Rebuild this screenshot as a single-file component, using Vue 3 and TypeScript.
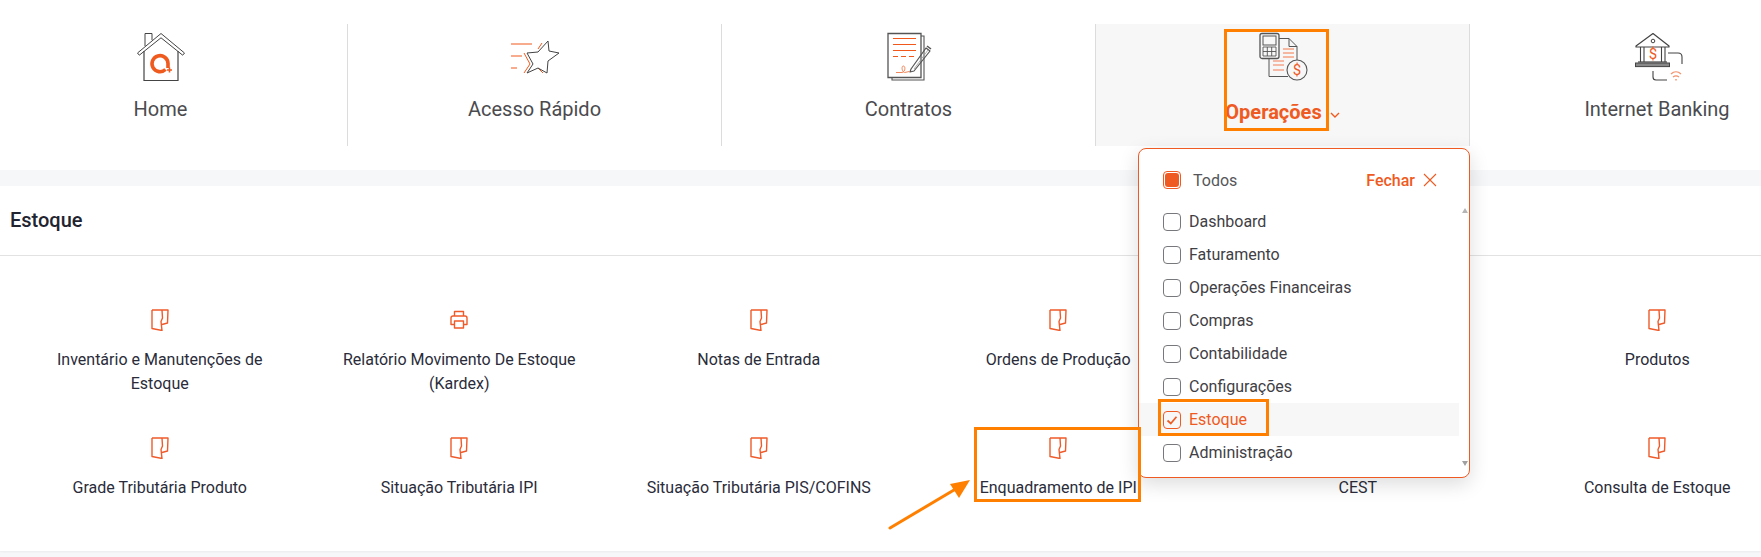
<script setup lang="ts">
interface GridItem { label: string; icon: 'door' | 'printer' }
const grid: GridItem[] = [
  { label: 'Inventário e Manutenções de Estoque', icon: 'door' },
  { label: 'Relatório Movimento De Estoque (Kardex)', icon: 'printer' },
  { label: 'Notas de Entrada', icon: 'door' },
  { label: 'Ordens de Produção', icon: 'door' },
  { label: 'Unidades', icon: 'door' },
  { label: 'Produtos', icon: 'door' },
  { label: 'Grade Tributária Produto', icon: 'door' },
  { label: 'Situação Tributária IPI', icon: 'door' },
  { label: 'Situação Tributária PIS/COFINS', icon: 'door' },
  { label: 'Enquadramento de IPI', icon: 'door' },
  { label: 'CEST', icon: 'door' },
  { label: 'Consulta de Estoque', icon: 'door' },
]
const options: string[] = ['Dashboard', 'Faturamento', 'Operações Financeiras', 'Compras', 'Contabilidade', 'Configurações', 'Estoque', 'Administração']
</script>

<template>
  <div class="page">
    <nav class="topnav">
      <div class="tab">
        <svg class="navicon" viewBox="0 0 48 48" fill="none" stroke="#444" stroke-width="1">
          <path d="M8 13V.5h7V7" />
          <path d="M24 .5 47.5 20l-1.8 2.2L24 4.8 2.3 22.2.5 20Z" stroke-linejoin="round" />
          <path d="M7 18v29.500h34V18" stroke-width="1.200" />
          <path d="M28.500 36.500A8 8 0 1 1 31 30.500V35" stroke="#ef5a1e" stroke-width="3.600" />
          <path d="M32.500 34.500v5M30 37h5" stroke="#ef5a1e" stroke-width="1.600" />
        </svg>
        <span class="tablabel">Home</span>
      </div>
      <div class="tab">
        <svg class="navicon" viewBox="0 0 48 48" fill="none" stroke="#f1581c" stroke-width="1">
          <path d="M0 11h21M0 23h11M0 35h6M31 10l-4 6M13 20l6 11-6 9M27 35l5 5" />
          <path d="M37 8 27 19l-11 1 6 11-6 9 11-5 9 5 1-12 11-8-10-2Z" stroke="#444" stroke-linejoin="round" />
        </svg>
        <span class="tablabel">Acesso Rápido</span>
      </div>
      <div class="tab">
        <svg class="navicon" viewBox="0 0 48 48" fill="none" stroke="#555">
          <path d="M3 .5h33v44H3Z" stroke-width="1.300" />
          <path d="M36 3h3v44H7v-2.500" stroke-width="1.100" />
          <path d="M8 5.500h23M8 11.500h23M8 17.500h23" stroke="#f1581c" stroke-width="1.100" />
          <path d="M8 23.500h23" stroke="#f1581c" stroke-width="1.100" stroke-dasharray="5 3" />
          <path d="M26 36 41 15l4 3-16 20-4 1Z" stroke-width="1.200" stroke-linejoin="round" />
          <path d="M42 13l4 3" stroke-width="1.500" />
          <path d="M29 36 43 17" stroke="#999" stroke-width=".8" />
          <path d="M11 39.500h6c3 0 4-6 1.500-6.500-2.500 0-1.500 6 1 6.500l5-1" stroke="#f1865a" stroke-width="1" />
        </svg>
        <span class="tablabel">Contratos</span>
      </div>
      <div class="tab active">
        <svg class="navicon" viewBox="0 0 48 48" fill="none" stroke="#555">
          <rect x="1" y=".5" width="19" height="25" rx="2" stroke-width="1.300" fill="#f7f7f7" />
          <rect x="4" y="3" width="13" height="9" stroke-width="1" />
          <path d="M4 14h13v9H4ZM8.300 14v9M12.700 14v9M4 18.500h13" stroke-width=".9" />
          <path d="M20 5.500h10l8 8V27M30 5.500v8h8M10 25.500V43.500h19" stroke-width="1" />
          <path d="M24 16h11M24 20h11M24 24h11" stroke="#f4794a" stroke-width="1" />
          <path d="M14 28h11M14 32h11M14 37h11" stroke="#f5a58a" stroke-width="1.600" />
          <circle cx="38" cy="37" r="10" stroke-width="1.100" fill="#f7f7f7" />
          <text class="dollar" x="38" y="42" text-anchor="middle">$</text>
        </svg>
        <span class="tablabel strong">Operações
          <svg class="chev" viewBox="0 0 10 6" fill="none" stroke="#ef5a1e" stroke-width="1.400"><path d="M1 1l4 4 4-4" /></svg>
        </span>
      </div>
      <div class="tab">
        <svg class="navicon wide" viewBox="0 0 50 48" fill="none" stroke="#444">
          <path d="M3 13 20 .5 36 13v1H3Z" stroke-width="1.200" stroke-linejoin="round" />
          <circle cx="20" cy="8" r="1.800" stroke-width="1" />
          <path d="M7.500 14v15M11 14v15M28.500 14v15M32 14v15" stroke-width="1.100" />
          <path d="M5 29h29" stroke-width="1.200" />
          <rect x="2.500" y="30" width="34" height="3.600" fill="#888" stroke-width="1" />
          <text class="dollar" x="20" y="26" text-anchor="middle">$</text>
          <path d="M35 20h10q4 0 4 4v7M20 38v6q0 3 3 3h11" stroke-width="1.100" />
          <path d="M38 41c3-3 7-3 10 0M40 44c2-1.500 4-1.500 6 0" stroke="#f5916a" stroke-width="1.200" />
          <path d="M43 46v1.500" stroke="#f5916a" stroke-width="1.500" />
        </svg>
        <span class="tablabel">Internet Banking</span>
      </div>
    </nav>

    <section class="stock">
      <h2 class="stock-title">Estoque</h2>
      <div class="stock-grid">
        <div v-for="item in grid" :key="item.label" class="cell">
          <svg v-if="item.icon === 'door'" class="cellicon" viewBox="0 0 18 22" fill="none" stroke="#ef5a2a" stroke-width="1.400" stroke-linejoin="round">
            <path d="M1 1H17L16.500 14 11 15.500" />
            <path d="M1 1V19.500L11 21.500 10 12.500 11.500 9 11 1" />
          </svg>
          <svg v-else class="cellicon" viewBox="0 0 18 22" fill="none" stroke="#ef5a2a" stroke-width="1.400" stroke-linejoin="round">
            <path d="M4.500 7V2.500h9V7" />
            <path d="M4 15.500H1V9q0-2 2-2h12q2 0 2 2v6.500h-3" />
            <path d="M4.500 12h9v7h-9Z" />
          </svg>
          <span class="celltext">{{ item.label }}</span>
        </div>
      </div>
    </section>

    <div class="menu">
      <div class="menu-head">
        <span class="box all"><i></i></span>
        <span class="todos">Todos</span>
        <span class="fechar">Fechar
          <svg class="close" viewBox="0 0 14 14" fill="none" stroke="#ef5a22" stroke-width="1.100"><path d="M1 1l12 12M13 1 1 13" /></svg>
        </span>
      </div>
      <ul class="menu-list">
        <li v-for="opt in options" :key="opt" class="menu-row" :class="{ picked: opt === 'Estoque' }">
          <span class="box">
            <svg v-if="opt === 'Estoque'" viewBox="0 0 16 16" fill="none" stroke="#ef5a22" stroke-width="1.700"><path d="M3.500 8.500 6.800 11.500 12.500 4.800" /></svg>
          </span>
          <span>{{ opt }}</span>
        </li>
      </ul>
      <i class="arrow up"></i>
      <i class="arrow down"></i>
    </div>

    <div class="mark mark-nav"></div>
    <div class="mark mark-opt"></div>
    <div class="mark mark-cell"></div>
    <svg class="pointer" viewBox="0 0 90 60" fill="none">
      <path d="M3 56 72 15" stroke="#ff8000" stroke-width="3" stroke-linecap="round" />
      <path d="M83 8 63 12 72 26Z" fill="#ff8000" />
    </svg>
  </div>
</template>

<style scoped>
.page {
  position: relative;
  width: 1761px;
  height: 557px;
  overflow: hidden;
  background: #f6f7f9;
  font-family: Roboto, "Liberation Sans", sans-serif;
}
.topnav {
  display: flex;
  height: 170px;
  padding: 24px 0 0 0;
  box-sizing: border-box;
  margin-left: -26px;
  width: 1900px;
  background: #fff;
}
.tab {
  flex: 0 0 374px;
  height: 122px;
  box-sizing: border-box;
  border-right: 1px solid #dcdcdc;
  display: flex;
  flex-direction: column;
  align-items: center;
  padding-top: 9px;
}
.tab:last-child { border-right: 0; }
.tab.active { background: #f7f7f7; }
.navicon {
  width: 48px;
  height: 48px;
  flex: none;
  overflow: visible;
}
.navicon.wide { width: 50px; margin-left: 2px; }
.dollar {
  font-family: Roboto, sans-serif;
  font-size: 15px;
  fill: #ef5a22;
  stroke: none;
}
.tablabel {
  margin-top: 16px;
  font-size: 20px;
  line-height: 24px;
  color: #4b4b4f;
  white-space: nowrap;
}
.tablabel.strong {
  display: flex;
  align-items: center;
  gap: 8px;
  margin-top: 19px;
  font-weight: 700;
  color: #ef5a22;
}
.chev { width: 10px; height: 6px; margin-top: 5px; }
.stock {
  margin-top: 16px;
  height: 365px;
  background: #fff;
  box-shadow: 0 1px 2px rgba(0, 0, 0, .05);
}
.stock-title {
  margin: 0;
  height: 70px;
  box-sizing: border-box;
  padding: 22px 0 0 10px;
  border-bottom: 1px solid #e2e2e2;
  font-size: 20px;
  line-height: 24px;
  font-weight: 500;
  color: #1f2430;
}
.stock-grid {
  display: grid;
  grid-template-columns: repeat(6, 299.5px);
  grid-auto-rows: 128px;
  padding: 53px 0 0 10px;
}
.cell {
  display: flex;
  flex-direction: column;
  align-items: center;
}
.cellicon { width: 18px; height: 22px; flex: none; }
.celltext {
  margin-top: 17px;
  width: 245px;
  text-align: center;
  font-size: 16px;
  line-height: 24px;
  color: #2a2c3a;
}
.menu {
  position: absolute;
  left: 1138px;
  top: 148px;
  width: 332px;
  height: 330px;
  box-sizing: border-box;
  padding: 22px 10px 0 0;
  background: #fff;
  border: 1px solid #ef5a22;
  border-radius: 8px;
  box-shadow: 0 6px 20px rgba(0, 0, 0, .14);
  font-size: 16px;
}
.menu-head {
  display: flex;
  align-items: center;
  height: 18px;
  padding-left: 24px;
  color: #55565a;
}
.todos { margin-left: 12px; }
.fechar {
  display: flex;
  align-items: center;
  gap: 8px;
  margin-left: auto;
  margin-right: 22px;
  font-weight: 500;
  color: #ef5a22;
}
.close { width: 14px; height: 14px; }
.box {
  width: 18px;
  height: 18px;
  flex: none;
  box-sizing: border-box;
  border: 1px solid #77787c;
  border-radius: 4px;
  display: flex;
  align-items: center;
  justify-content: center;
}
.box svg { width: 16px; height: 16px; }
.box.all { border-color: #ef5a22; }
.box.all i {
  width: 14px;
  height: 14px;
  border-radius: 3px;
  background: #ef5a22;
}
.menu-list {
  list-style: none;
  margin: 16px 0 0;
  padding: 0;
}
.menu-row {
  display: flex;
  align-items: center;
  gap: 8px;
  height: 33px;
  padding-left: 24px;
  color: #3f4045;
}
.menu-row.picked {
  background: #f7f7f7;
  color: #ef5a22;
}
.menu-row.picked .box { border-color: #ef5a22; }
.arrow {
  position: absolute;
  right: 1px;
  width: 0;
  height: 0;
  border-left: 3.500px solid transparent;
  border-right: 3.500px solid transparent;
}
.arrow.up { top: 59px; border-bottom: 5px solid #b5b5b5; }
.arrow.down { top: 312px; border-top: 5px solid #a0a0a0; }
.mark {
  position: absolute;
  box-sizing: border-box;
  border: 3px solid #ff8000;
}
.mark-nav { left: 1224px; top: 29px; width: 105px; height: 102px; }
.mark-opt { left: 1158px; top: 399px; width: 111px; height: 37px; }
.mark-cell { left: 974px; top: 427px; width: 167px; height: 75px; }
.pointer {
  position: absolute;
  left: 887px;
  top: 472px;
  width: 90px;
  height: 60px;
}
</style>

<style>
html, body { margin: 0; overflow: hidden; background: #fff; }
</style>
